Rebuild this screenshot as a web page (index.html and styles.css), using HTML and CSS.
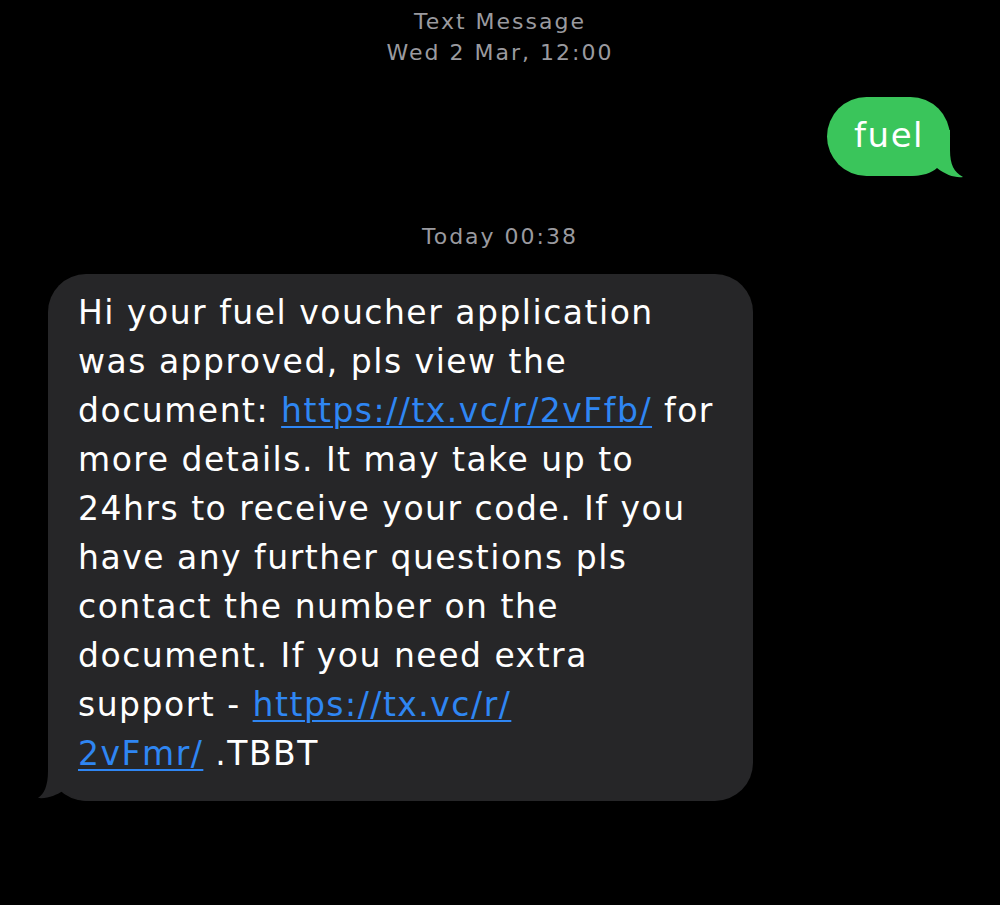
FILE: index.html
```html
<!doctype html>
<html lang="en">
  <head>
    <meta charset="UTF-8" />
    <meta name="viewport" content="width=device-width, initial-scale=1.0" />
    <title>Messages</title>
    <link rel="stylesheet" href="styles.css">
  </head>
  <body>
    <div class="thread">
      <div class="stamp stamp-top">
        <div>Text Message</div>
        <div>Wed 2 Mar, 12:00</div>
      </div>

      <div class="row row-out">
        <div class="bubble out">
          <svg class="tail tail-out" width="60" height="50" viewBox="0 0 60 50">
            <path d="M40,0 L40,20 C40,35 44,42 53,47 C45,48 36,45 27,38 C22,43 12,46 0,46 L0,0 Z" />
          </svg>
          <span class="text">fuel</span>
        </div>
      </div>

      <div class="stamp stamp-today">Today 00:38</div>

      <div class="row row-in">
        <div class="bubble in">
          <svg class="tail tail-in" width="60" height="42" viewBox="0 0 60 42">
            <path d="M18,0 L18,10 C18,25 14,33 8,37 C18,38 26,34 33,30 C40,36 48,40 60,40 L60,0 Z" />
          </svg>
          <p class="text">
            Hi your fuel voucher application<br>
            was approved, pls view the<br>
            document: <a href="#">https://tx.vc/r/2vFfb/</a> for<br>
            more details. It may take up to<br>
            24hrs to receive your code. If you<br>
            have any further questions pls<br>
            contact the number on the<br>
            document. If you need extra<br>
            support - <a href="#">https://tx.vc/r/<br>2vFmr/</a> .TBBT
          </p>
        </div>
      </div>
    </div>
  </body>
</html>
```

FILE: styles.css
```css
* {
  margin: 0;
  padding: 0;
  box-sizing: border-box;
}

body {
  background: #000;
  color: #fff;
  font-family: 'DejaVu Sans', Inter, sans-serif;
  min-height: 100vh;
}

.thread {
  display: flex;
  flex-direction: column;
  padding-top: 6px;
}

.stamp {
  color: #9a9a9f;
  font-size: 22px;
  line-height: 31px;
  letter-spacing: 2px;
  text-align: center;
}

.stamp-today {
  margin-top: 45px;
}

.row {
  display: flex;
}

.row-out {
  justify-content: flex-end;
  padding-right: 50px;
  margin-top: 29px;
}

.row-in {
  padding-left: 48px;
  margin-top: 22px;
}

.bubble {
  position: relative;
}

.bubble .text {
  position: relative;
}

.bubble .tail {
  position: absolute;
}

.out {
  background: #3ac55b;
  border-radius: 40px;
  height: 79px;
  padding: 0 26px 0 27px;
  font-size: 34px;
  letter-spacing: 1.5px;
  line-height: 76px;
}

.tail-out {
  right: -20px;
  bottom: -4px;
  fill: #3ac55b;
}

.in {
  background: #262628;
  border-radius: 38px;
  width: 705px;
  padding: 14px 20px 23px 30px;
  font-size: 33px;
  letter-spacing: 1.5px;
  line-height: 49px;
}

.in a {
  color: #2f86f3;
  text-decoration: underline;
  text-decoration-thickness: 1.5px;
  text-underline-offset: 4px;
}

.tail-in {
  left: -18px;
  bottom: -2px;
  fill: #262628;
}
```
